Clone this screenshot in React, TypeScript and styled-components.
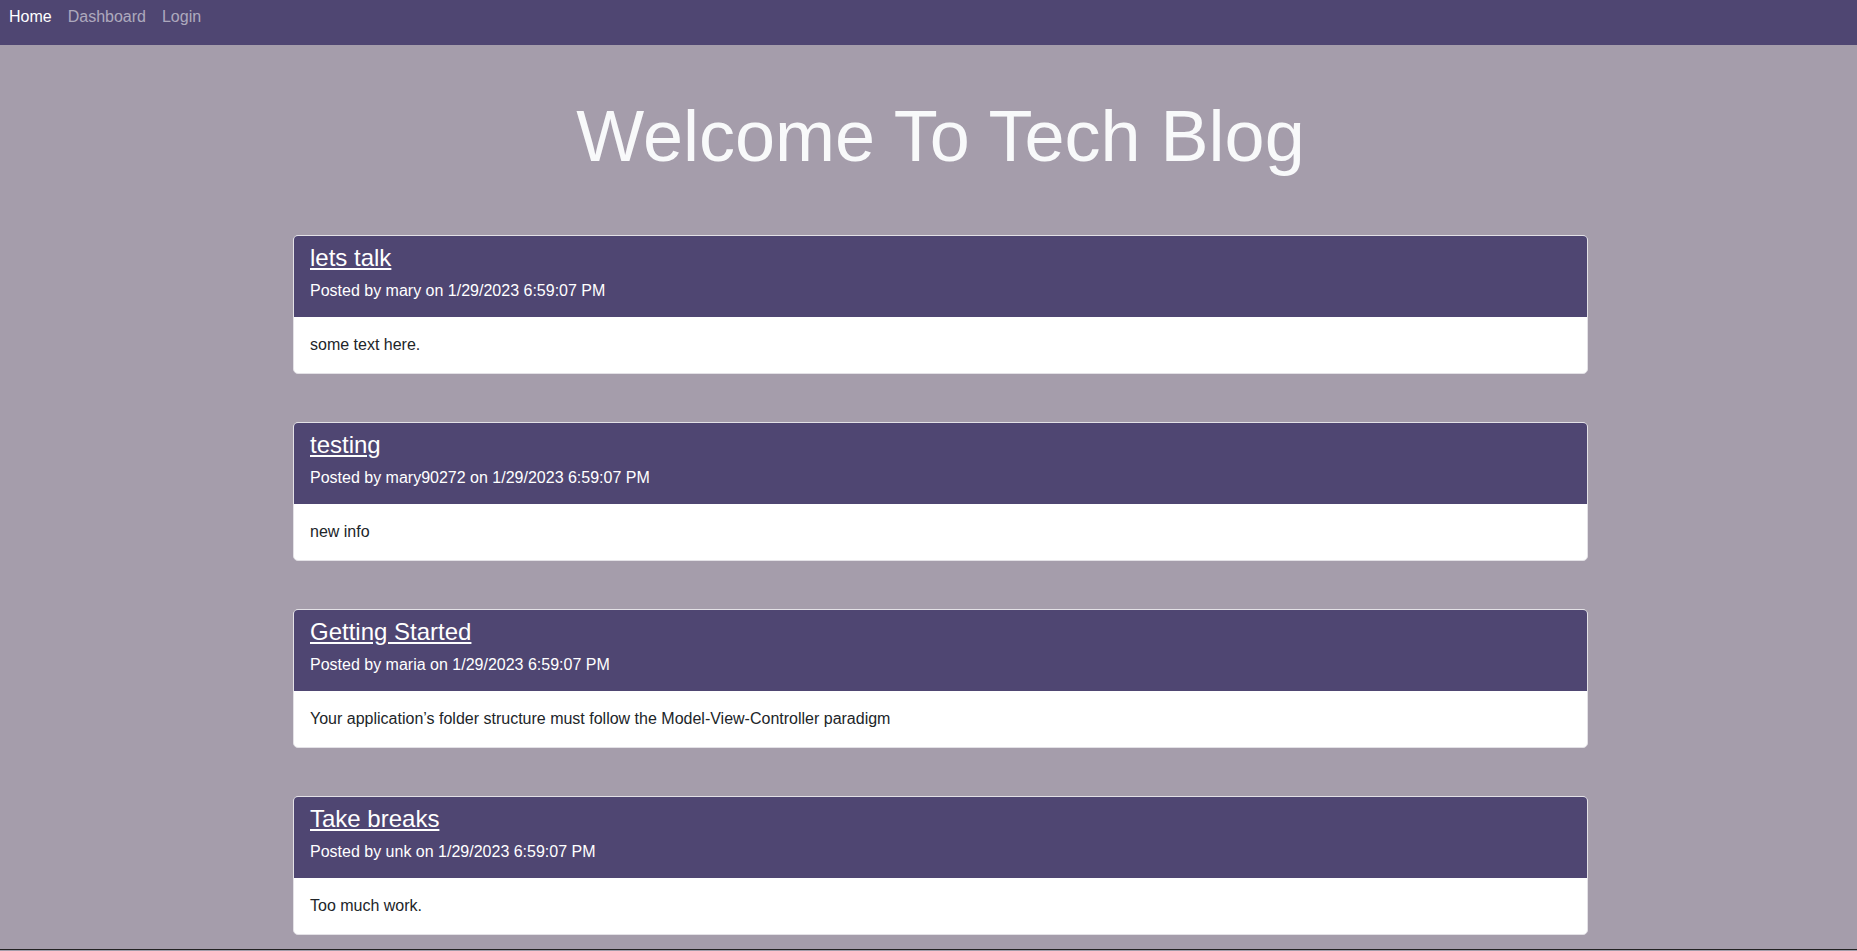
import React from "react";
import styled, { createGlobalStyle } from "styled-components";

const GlobalStyle = createGlobalStyle`
  html, body {
    margin: 0;
    padding: 0;
    background: #a59dab;
    font-family: "Liberation Sans", Arial, sans-serif;
    font-size: 16px;
    line-height: 1.5;
    color: #212529;
  }
  * { box-sizing: border-box; }
`;

const Page = styled.div`
  min-height: 951px;
  display: flex;
  flex-direction: column;
`;

const NavBar = styled.nav`
  height: 45px;
  background: #4f4672;
  display: flex;
  align-items: flex-start;
  gap: 16px;
  padding: 5px 0 0 9px;
`;

const NavLink = styled.a<{ $active?: boolean }>`
  color: ${(p) => (p.$active ? "#ffffff" : "rgba(255,255,255,0.55)")};
  text-decoration: none;
  font-size: 16px;
  line-height: 24px;
  cursor: pointer;
`;

const Main = styled.main`
  width: 1295px;
  margin-left: 293px;
  display: flex;
  flex-direction: column;
  padding-bottom: 14px;
`;

const Title = styled.h1`
  margin: 48px 0 56px;
  text-align: center;
  font-size: 72px;
  font-weight: 400;
  line-height: 1.2;
  color: #f8f9fa;
`;

const CardList = styled.div`
  display: flex;
  flex-direction: column;
  gap: 48px;
`;

const Card = styled.article`
  border: 1px solid #e3e1e6;
  border-radius: 5px;
  overflow: hidden;
  background: #ffffff;
`;

const CardHeader = styled.header`
  background: #4f4672;
  padding: 8px 16px 14px;
  color: #ffffff;
`;

const PostTitle = styled.a`
  display: block;
  margin: 0 0 6px;
  font-size: 24px;
  line-height: 28.8px;
  color: #ffffff;
  text-decoration: underline;
  text-underline-offset: 2px;
  width: fit-content;
`;

const Meta = styled.p`
  margin: 0;
  font-size: 16px;
  line-height: 24px;
  color: #ffffff;
`;

const CardBody = styled.div`
  padding: 16px;
  font-size: 16px;
  line-height: 24px;
  color: #212529;
`;

const Footer = styled.footer`
  border-top: 1px solid #222;
  flex: 1;
`;

const posts = [
  { title: "lets talk", author: "mary", body: "some text here." },
  { title: "testing", author: "mary90272", body: "new info" },
  {
    title: "Getting Started",
    author: "maria",
    body: "Your application\u2019s folder structure must follow the Model-View-Controller paradigm",
  },
  { title: "Take breaks", author: "unk", body: "Too much work." },
];

export default function App() {
  return (
    <Page>
      <GlobalStyle />
      <NavBar>
        <NavLink $active>Home</NavLink>
        <NavLink>Dashboard</NavLink>
        <NavLink>Login</NavLink>
      </NavBar>
      <Main>
        <Title>Welcome To Tech Blog</Title>
        <CardList>
          {posts.map((p) => (
            <Card key={p.title}>
              <CardHeader>
                <PostTitle>{p.title}</PostTitle>
                <Meta>
                  Posted by {p.author} on 1/29/2023 6:59:07 PM
                </Meta>
              </CardHeader>
              <CardBody>{p.body}</CardBody>
            </Card>
          ))}
        </CardList>
      </Main>
      <Footer />
    </Page>
  );
}
